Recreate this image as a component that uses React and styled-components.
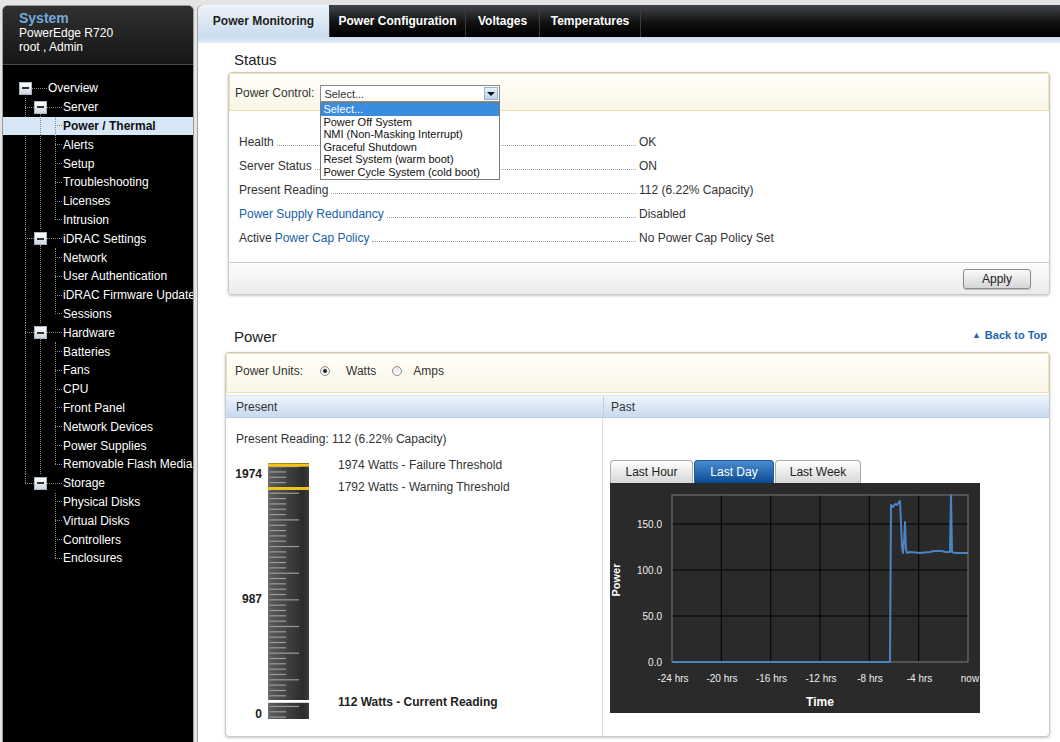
import React from 'react';
import styled, { createGlobalStyle } from 'styled-components';

const GlobalStyle = createGlobalStyle`
  html, body { margin: 0; padding: 0; height: 100%; overflow: hidden; }
  body {
    background: #e4e4e4;
    font-family: "Liberation Sans", Arial, sans-serif;
    font-size: 12px;
    color: #333;
  }
`;

const Page = styled.div`
  display: flex;
  height: 100vh;
  padding: 5px 0 0 2px;
  box-sizing: border-box;
`;

/* ---------- sidebar ---------- */

const Sidebar = styled.aside`
  width: 192px;
  flex: none;
  background: #000;
  border: 1px solid #9a9a9a;
  border-bottom: none;
  border-radius: 6px 6px 0 0;
  box-sizing: border-box;
  overflow: hidden;
  color: #fff;
`;

const SideHeader = styled.div`
  height: 59px;
  box-sizing: border-box;
  padding: 5px 0 0 16px;
  background: linear-gradient(#303030, #161616);
  border-bottom: 1px solid #4a4a4a;
  line-height: 14px;
`;

const SystemTitle = styled.div`
  font-size: 14px;
  font-weight: bold;
  line-height: 15px;
  color: #74a9de;
`;

const Tree = styled.div`
  padding-top: 14px;
`;

const TreeRow = styled.div`
  display: flex;
  align-items: center;
  height: 18.8px;
  padding-left: ${(p) => p.$indent}px;
  white-space: nowrap;
  background: ${(p) => (p.$active ? '#d8e7f6' : 'transparent')};
  color: ${(p) => (p.$active ? '#111' : '#fff')};
  font-weight: ${(p) => (p.$active ? 'bold' : 'normal')};
`;

const Dots = styled.span`
  width: ${(p) => p.$w}px;
  flex: none;
  border-top: 1px dotted #8a8a8a;
  margin-right: ${(p) => (p.$last ? '1px' : '0')};
`;

const Expander = styled.span`
  width: 13px;
  height: 13px;
  box-sizing: border-box;
  flex: none;
  border: 1px solid #a8b4c0;
  background: linear-gradient(#ffffff, #cdd6e0);
  display: flex;
  align-items: center;
  justify-content: center;
  &::after {
    content: '';
    width: 7px;
    height: 2px;
    background: #333;
  }
`;

const Branch = styled.div`
  position: relative;
  &::before {
    content: '';
    position: absolute;
    left: 22px;
    top: 0;
    height: ${(p) => (p.$last ? '9.5px' : '100%')};
    border-left: 1px dotted #8a8a8a;
  }
  &::after {
    content: '';
    display: ${(p) => (p.$last ? 'none' : 'block')};
    position: absolute;
    left: 37px;
    top: 16px;
    bottom: 0;
    border-left: 1px dotted #8a8a8a;
  }
`;

const Leaves = styled.div`
  position: relative;
  &::before {
    content: '';
    position: absolute;
    left: 52px;
    top: 0;
    height: calc(100% - 9.4px);
    border-left: 1px dotted #8a8a8a;
  }
`;

/* ---------- main ---------- */

const Main = styled.main`
  flex: 1;
  margin-left: 3px;
  display: flex;
  flex-direction: column;
  background: #fff;
  border-left: 1px solid #a4a4a4;
  border-radius: 5px 0 0 0;
  min-width: 0;
`;

const TabBar = styled.nav`
  display: flex;
  height: 32px;
  background: linear-gradient(#42454c, #111 55%, #000);
  border-radius: 5px 0 0 0;
`;

const Tab = styled.div`
  width: ${(p) => p.$w}px;
  display: flex;
  align-items: center;
  justify-content: center;
  font-weight: bold;
  font-size: 12px;
  border-right: 1px solid #3c3c3c;
  color: ${(p) => (p.$active ? '#1e1e1e' : '#fff')};
  background: ${(p) => (p.$active ? 'linear-gradient(#eef4fa, #c9dbee)' : 'transparent')};
  border-radius: ${(p) => (p.$active ? '5px 0 0 0' : '0')};
`;

const TabStrip = styled.div`
  height: 6px;
  background: linear-gradient(#c9dcef, #e4eef8);
`;

const Content = styled.div`
  padding: 0 10px 0 30px;
`;

const SectionTitle = styled.h2`
  margin: 0;
  padding: 7px 0 2px 6px;
  font-size: 15px;
  font-weight: normal;
  line-height: 20px;
  color: #222;
`;

const Panel = styled.section`
  position: relative;
  border: 1px solid #c9c9c9;
  border-radius: 4px;
  box-shadow: 0 1px 3px rgba(0, 0, 0, 0.22);
  background: #fff;
  margin-left: ${(p) => p.$shift || 0}px;
`;

const Band = styled.div`
  height: ${(p) => p.$h}px;
  box-sizing: border-box;
  display: flex;
  align-items: flex-start;
  padding: ${(p) => p.$pad};
  border: 1px solid #f1e3b0;
  background: linear-gradient(#fffefa, #faf6e6);
  line-height: 16px;
`;

const ControlLabel = styled.span`
  line-height: 17px;
  margin-right: 6px;
`;

const SelectBox = styled.div`
  position: relative;
  width: 180px;
  height: 17px;
  box-sizing: border-box;
  border: 1px solid #8a8a8a;
  background: #fff;
  display: flex;
  align-items: center;
  justify-content: space-between;
  padding-left: 3px;
  font-size: 11px;
`;

const SelectArrow = styled.span`
  width: 14px;
  height: 13px;
  margin-right: 1px;
  border: 1px solid #9bb4cc;
  box-sizing: border-box;
  background: linear-gradient(#e8f2fb, #b7d3ec);
  display: flex;
  align-items: center;
  justify-content: center;
  &::after {
    content: '';
    border-left: 4px solid transparent;
    border-right: 4px solid transparent;
    border-top: 4px solid #111;
  }
`;

const OptionList = styled.ul`
  position: absolute;
  top: 16px;
  left: -1px;
  width: 180px;
  box-sizing: border-box;
  margin: 0;
  padding: 0;
  list-style: none;
  border: 1px solid #7a7a7a;
  background: #fff;
  z-index: 5;
`;

const Option = styled.li`
  height: 12.6px;
  line-height: 12.6px;
  padding-left: 2px;
  font-size: 11px;
  color: ${(p) => (p.$selected ? '#fff' : '#111')};
  background: ${(p) => (p.$selected ? '#3a8ce0' : 'transparent')};
`;

const StatusBody = styled.div`
  padding: 19px 0 12px 10px;
`;

const StatusRow = styled.div`
  display: grid;
  grid-template-columns: 400px 1fr;
  height: 24px;
  align-items: center;
`;

const RowLabel = styled.div`
  display: flex;
  align-items: baseline;
`;

const Leader = styled.span`
  flex: 1;
  margin: 0 3px;
  border-bottom: 1px dotted #a0a0a0;
`;

const LinkText = styled.a`
  color: #2060aa;
  text-decoration: none;
  margin-left: ${(p) => (p.$gap ? '3px' : '0')};
`;

const PanelFooter = styled.div`
  height: 32px;
  box-sizing: border-box;
  border-top: 1px solid #cfcfcf;
  border-radius: 0 0 4px 4px;
  background: linear-gradient(#fdfdfd, #ebebeb);
  display: flex;
  justify-content: flex-end;
  align-items: center;
  padding-right: 18px;
`;

const Button = styled.button`
  width: 68px;
  height: 20px;
  border: 1px solid #8a8a8a;
  border-radius: 3px;
  background: linear-gradient(#fafafa, #d6d6d6);
  box-shadow: 0 1px 1px rgba(0, 0, 0, 0.2);
  font-family: inherit;
  font-size: 12px;
  color: #222;
  padding: 0;
`;

const SectionHeader = styled.div`
  margin-top: 30px;
  height: 22px;
  display: flex;
  align-items: center;
  justify-content: space-between;
  padding: 0 3px 0 6px;
  margin-bottom: 5px;
`;

const HeaderTitle = styled.h2`
  margin: 0;
  font-size: 15px;
  font-weight: normal;
  color: #222;
`;

const BackLink = styled.a`
  color: #2266b0;
  font-size: 11px;
  font-weight: bold;
  text-decoration: none;
  display: flex;
  align-items: center;
  gap: 4px;
  margin-top: -2px;
  span { font-size: 9px; }
`;

const Radio = styled.span`
  width: 10px;
  height: 10px;
  box-sizing: border-box;
  border-radius: 50%;
  border: 1px solid #8c8c8c;
  background: linear-gradient(#e4e4e4, #fff);
  margin: 3px ${(p) => p.$after}px 0 ${(p) => p.$before}px;
  display: flex;
  align-items: center;
  justify-content: center;
  &::after {
    content: '';
    display: ${(p) => (p.$checked ? 'block' : 'none')};
    width: 4px;
    height: 4px;
    border-radius: 50%;
    background: #222;
  }
`;

const ColumnHead = styled.div`
  margin-top: 2px;
  display: grid;
  grid-template-columns: 377px 1fr;
  height: 23px;
  box-sizing: border-box;
  background: linear-gradient(#eef4fb, #c7daee);
  border-top: 1px solid #d9e5f1;
  border-bottom: 1px solid #b8cce0;
`;

const HeadCell = styled.div`
  display: flex;
  align-items: center;
  padding-left: ${(p) => p.$pad}px;
  border-left: ${(p) => (p.$divider ? '1px solid #c0cfde' : 'none')};
  color: #333;
`;

const Columns = styled.div`
  display: grid;
  grid-template-columns: 377px 1fr;
  height: 318px;
`;

const PresentCol = styled.div`
  padding: 14px 0 0 10px;
  border-right: 1px solid #dcdcdc;
`;

const ReadingLine = styled.div`
  line-height: 15px;
  color: #333;
`;

const GaugeRow = styled.div`
  display: flex;
  margin-top: 10px;
`;

const ScaleLabels = styled.div`
  width: 26px;
  height: 256px;
  margin-top: 9px;
  display: flex;
  flex-direction: column;
  align-items: flex-end;
  font-weight: bold;
  line-height: 16px;
  color: #222;
`;

const ScaleValue = styled.span`
  margin-top: ${(p) => p.$mt};
`;

const GaugeBar = styled.svg`
  display: block;
  margin: 6px 0 0 6px;
  flex: none;
`;

const Thresholds = styled.div`
  margin-left: 29px;
  height: 253px;
  display: flex;
  flex-direction: column;
  line-height: 16px;
  color: #333;
`;

const ThresholdText = styled.div`
  margin-top: ${(p) => p.$mt};
  font-weight: ${(p) => (p.$bold ? 'bold' : 'normal')};
  color: ${(p) => (p.$bold ? '#222' : '#333')};
`;

const PastCol = styled.div`
  padding: 42px 0 0 7px;
`;

const RangeTabs = styled.div`
  display: flex;
  gap: 1px;
`;

const RangeTab = styled.div`
  width: ${(p) => p.$w}px;
  height: 23px;
  box-sizing: border-box;
  display: flex;
  align-items: center;
  justify-content: center;
  border: 1px solid ${(p) => (p.$active ? '#1d5c9e' : '#ababab')};
  border-bottom: none;
  border-radius: 4px 4px 0 0;
  background: ${(p) => (p.$active ? 'linear-gradient(#4a8bd0, #0b4a92)' : 'linear-gradient(#ffffff, #d6d6d6)')};
  color: ${(p) => (p.$active ? '#fff' : '#222')};
  font-size: 12px;
`;

const Chart = styled.svg`
  display: block;
  background: #2a2a2a;
`;

/* ---------- data ---------- */

const groups = [
  { label: 'Server', children: ['Power / Thermal', 'Alerts', 'Setup', 'Troubleshooting', 'Licenses', 'Intrusion'] },
  { label: 'iDRAC Settings', children: ['Network', 'User Authentication', 'iDRAC Firmware Update', 'Sessions'] },
  { label: 'Hardware', children: ['Batteries', 'Fans', 'CPU', 'Front Panel', 'Network Devices', 'Power Supplies', 'Removable Flash Media'] },
  { label: 'Storage', children: ['Physical Disks', 'Virtual Disks', 'Controllers', 'Enclosures'] },
];

const options = [
  'Select...',
  'Power Off System',
  'NMI (Non-Masking Interrupt)',
  'Graceful Shutdown',
  'Reset System (warm boot)',
  'Power Cycle System (cold boot)',
];

const powerLine =
  '62,179 280,179 281,22 283,24 285,21 287,22 289,19 290,18 291,40 292,64 293,70 294,58 295,39 296,66 297,70 300,69 310,70 320,69 324,68 332,68 335,69 340,69 341,12 342,69 345,70 358,70';

function Gauge() {
  const ticks = [];
  for (let i = 0; i < 48; i++) {
    const y = 3.6 + i * 5.33;
    ticks.push(<line key={i} x1="1.5" x2={i % 5 === 0 ? 31 : 18} y1={y} y2={y} stroke="#9c9c9c" strokeWidth="1.2" />);
  }
  return (
    <GaugeBar width="41" height="256" viewBox="0 0 41 256">
      <defs>
        <linearGradient id="gbar" x1="0" x2="1" y1="0" y2="0">
          <stop offset="0" stopColor="#737373" />
          <stop offset="0.06" stopColor="#5a5a5a" />
          <stop offset="0.85" stopColor="#2b2b2b" />
          <stop offset="1" stopColor="#3c3c3c" />
        </linearGradient>
      </defs>
      <rect x="0" y="0" width="41" height="256" fill="url(#gbar)" />
      {ticks}
      <rect x="0" y="0.5" width="41" height="3.2" fill="#f2c21b" />
      <rect x="0" y="24" width="41" height="3" fill="#f2c21b" />
      <rect x="0" y="237" width="41" height="2.8" fill="#fff" />
    </GaugeBar>
  );
}

function PowerChart() {
  const xs = [62, 111.3, 160.7, 210, 259.3, 308.7, 358];
  const xLabels = [
    ['-24 hrs', 63], ['-20 hrs', 112], ['-16 hrs', 161.5], ['-12 hrs', 211],
    ['-8 hrs', 260], ['-4 hrs', 309.5], ['now', 360],
  ];
  const yLabels = [['150.0', 41], ['100.0', 87], ['50.0', 133], ['0.0', 179]];
  return (
    <Chart width="370" height="230" viewBox="0 0 370 230" fontFamily="Liberation Sans, Arial, sans-serif">
      {xs.slice(1, -1).map((x) => (
        <line key={x} x1={x} x2={x} y1="12" y2="179" stroke="#000" strokeWidth="1" />
      ))}
      {[41, 87, 133].map((y) => (
        <line key={y} x1="62" x2="358" y1={y} y2={y} stroke="#000" strokeWidth="1" />
      ))}
      <rect x="62" y="12" width="296" height="167" fill="none" stroke="#7a7a7a" strokeWidth="1" />
      <polyline points={powerLine} fill="none" stroke="#4b82c2" strokeWidth="2" strokeLinejoin="round" />
      {yLabels.map(([t, y]) => (
        <text key={t} x="52" y={y + 4} fill="#eee" fontSize="10" textAnchor="end">{t}</text>
      ))}
      {xLabels.map(([t, x]) => (
        <text key={t} x={x} y="199" fill="#eee" fontSize="10" textAnchor="middle">{t}</text>
      ))}
      <text x="210" y="223" fill="#fff" fontSize="12" fontWeight="bold" textAnchor="middle">Time</text>
      <text transform="translate(10,97) rotate(-90)" fill="#fff" fontSize="11" fontWeight="bold" textAnchor="middle">Power</text>
    </Chart>
  );
}

export default function App() {
  return (
    <>
      <GlobalStyle />
      <Page>
        <Sidebar>
          <SideHeader>
            <SystemTitle>System</SystemTitle>
            <div>PowerEdge R720</div>
            <div>root , Admin</div>
          </SideHeader>
          <Tree>
            <TreeRow $indent={16}>
              <Expander />
              <Dots $w={15} $last />
              Overview
            </TreeRow>
            {groups.map((g, gi) => (
              <Branch key={g.label} $last={gi === groups.length - 1}>
                <TreeRow $indent={22}>
                  <Dots $w={9} />
                  <Expander />
                  <Dots $w={15} $last />
                  {g.label}
                </TreeRow>
                <Leaves>
                  {g.children.map((c) => (
                    <TreeRow key={c} $indent={52} $active={c === 'Power / Thermal'}>
                      <Dots $w={7} $last />
                      {c}
                    </TreeRow>
                  ))}
                </Leaves>
              </Branch>
            ))}
          </Tree>
        </Sidebar>

        <Main>
          <TabBar>
            <Tab $w={131} $active>Power Monitoring</Tab>
            <Tab $w={135}>Power Configuration</Tab>
            <Tab $w={73}>Voltages</Tab>
            <Tab $w={100}>Temperatures</Tab>
          </TabBar>
          <TabStrip />
          <Content>
            <SectionTitle>Status</SectionTitle>
            <Panel>
              <Band $h={38} $pad="11px 0 0 5px">
                <ControlLabel>Power Control:</ControlLabel>
                <SelectBox>
                  Select...
                  <SelectArrow />
                  <OptionList>
                    {options.map((o, i) => (
                      <Option key={o} $selected={i === 0}>{o}</Option>
                    ))}
                  </OptionList>
                </SelectBox>
              </Band>
              <StatusBody>
                <StatusRow>
                  <RowLabel>Health<Leader /></RowLabel>
                  <span>OK</span>
                </StatusRow>
                <StatusRow>
                  <RowLabel>Server Status<Leader /></RowLabel>
                  <span>ON</span>
                </StatusRow>
                <StatusRow>
                  <RowLabel>Present Reading<Leader /></RowLabel>
                  <span>112 (6.22% Capacity)</span>
                </StatusRow>
                <StatusRow>
                  <RowLabel><LinkText href="#">Power Supply Redundancy</LinkText><Leader /></RowLabel>
                  <span>Disabled</span>
                </StatusRow>
                <StatusRow>
                  <RowLabel>Active<LinkText href="#" $gap>Power Cap Policy</LinkText><Leader /></RowLabel>
                  <span>No Power Cap Policy Set</span>
                </StatusRow>
              </StatusBody>
              <PanelFooter>
                <Button>Apply</Button>
              </PanelFooter>
            </Panel>

            <SectionHeader>
              <HeaderTitle>Power</HeaderTitle>
              <BackLink href="#"><span>▲</span>Back to Top</BackLink>
            </SectionHeader>
            <Panel $shift={-3}>
              <Band $h={40} $pad="9px 0 0 8px">
                Power Units:
                <Radio $checked $before={17} $after={16} />
                Watts
                <Radio $before={16} $after={11} />
                Amps
              </Band>
              <ColumnHead>
                <HeadCell $pad={10}>Present</HeadCell>
                <HeadCell $pad={7} $divider>Past</HeadCell>
              </ColumnHead>
              <Columns>
                <PresentCol>
                  <ReadingLine>Present Reading: 112 (6.22% Capacity)</ReadingLine>
                  <GaugeRow>
                    <ScaleLabels>
                      <ScaleValue $mt="0">1974</ScaleValue>
                      <ScaleValue $mt="109px">987</ScaleValue>
                      <ScaleValue $mt="auto">0</ScaleValue>
                    </ScaleLabels>
                    <Gauge />
                    <Thresholds>
                      <ThresholdText $mt="0">1974 Watts - Failure Threshold</ThresholdText>
                      <ThresholdText $mt="6px">1792 Watts - Warning Threshold</ThresholdText>
                      <ThresholdText $mt="auto" $bold>112 Watts - Current Reading</ThresholdText>
                    </Thresholds>
                  </GaugeRow>
                </PresentCol>
                <PastCol>
                  <RangeTabs>
                    <RangeTab $w={83}>Last Hour</RangeTab>
                    <RangeTab $w={80} $active>Last Day</RangeTab>
                    <RangeTab $w={86}>Last Week</RangeTab>
                  </RangeTabs>
                  <PowerChart />
                </PastCol>
              </Columns>
            </Panel>
          </Content>
        </Main>
      </Page>
    </>
  );
}
